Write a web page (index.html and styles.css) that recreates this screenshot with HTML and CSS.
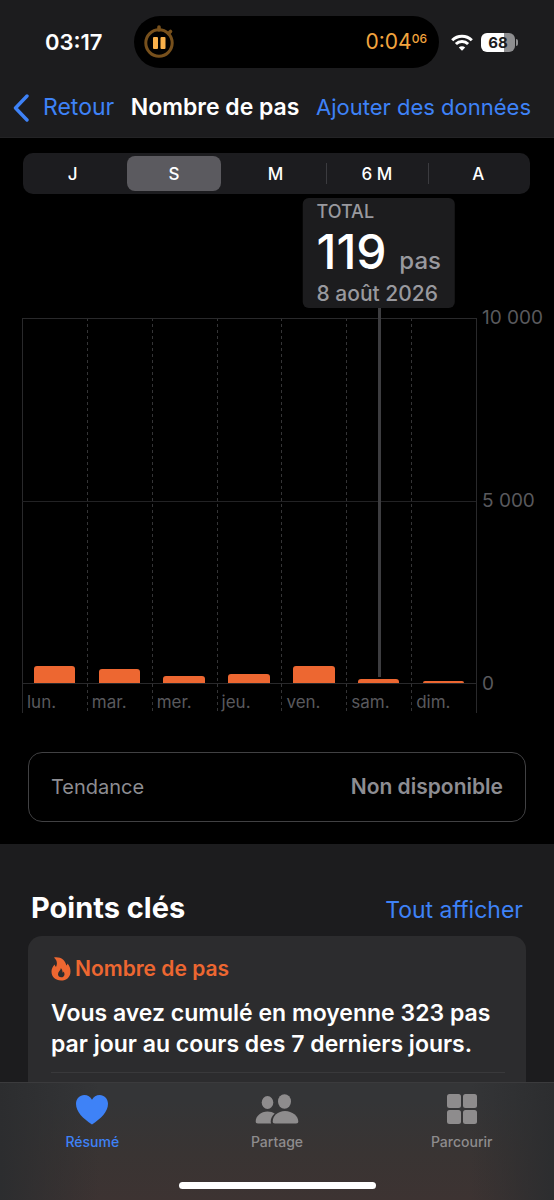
FILE: index.html
```html
<!DOCTYPE html>
<html lang="fr">
<head>
<meta charset="utf-8">
<meta name="viewport" content="width=device-width, initial-scale=1">
<title>Nombre de pas</title>
<link rel="stylesheet" href="styles.css">
</head>
<body>
<div class="app">
  <header class="header">
    <div class="status">
      <time class="clock">03:17</time>
      <div class="island">
        <svg class="stopwatch" viewBox="0 0 32 36" aria-hidden="true">
          <circle cx="16" cy="19" r="13.2" fill="none" stroke="#77501c" stroke-width="3"/>
          <path d="M16 6V3M25.5 9.5l2-2" stroke="#77501c" stroke-width="3.6" stroke-linecap="round"/>
          <rect x="10" y="13" width="5" height="12" rx="1" fill="#f9b14b"/>
          <rect x="17.500" y="13" width="5" height="12" rx="1" fill="#f9b14b"/>
        </svg>
        <span class="timer">0:04<span class="hundredths">06</span></span>
      </div>
      <div class="signals">
        <svg class="wifi" viewBox="0 0 22 17" aria-hidden="true">
          <g fill="none" stroke="#fff" stroke-width="3">
            <path d="M1.200 6.200a14 14 0 0 1 19.600 0"/>
            <path d="M4.900 10a8.700 8.700 0 0 1 12.200 0"/>
          </g>
          <path d="M11 16.800l-3.200-3.300a4.600 4.600 0 0 1 6.400 0z" fill="#fff"/>
        </svg>
        <span class="battery"><span class="level">68</span></span>
      </div>
    </div>
    <nav class="navbar">
      <a class="back" href="#retour">
        <svg class="chevron" viewBox="0 0 16 28" aria-hidden="true"><path d="M14 2L2.500 14 14 26" fill="none" stroke="currentColor" stroke-width="3.400" stroke-linecap="round" stroke-linejoin="round"/></svg>
        Retour
      </a>
      <h1 class="title">Nombre de pas</h1>
      <a class="add" href="#ajouter">Ajouter des données</a>
    </nav>
  </header>

  <main class="content">
    <section class="chart-section">
      <div class="segments">
        <button class="segment" type="button">J</button>
        <button class="segment selected" type="button" aria-pressed="true">S</button>
        <button class="segment" type="button">M</button>
        <button class="segment divided" type="button">6 M</button>
        <button class="segment divided" type="button">A</button>
      </div>

      <div class="chart">
        <div class="plot">
          <div class="day"><div class="track"><div class="bar" style="height:4.8%"></div></div><span class="day-name">lun.</span></div>
          <div class="day"><div class="track"><div class="bar" style="height:3.9%"></div></div><span class="day-name">mar.</span></div>
          <div class="day"><div class="track"><div class="bar" style="height:1.8%"></div></div><span class="day-name">mer.</span></div>
          <div class="day"><div class="track"><div class="bar" style="height:2.6%"></div></div><span class="day-name">jeu.</span></div>
          <div class="day"><div class="track"><div class="bar" style="height:4.8%"></div></div><span class="day-name">ven.</span></div>
          <div class="day">
            <div class="track"><div class="bar" style="height:1.2%"></div></div><span class="day-name">sam.</span>
            <div class="cursor"></div>
            <div class="tooltip">
              <span class="tip-label">TOTAL</span>
              <span class="tip-value">119 <span class="tip-unit">pas</span></span>
              <span class="tip-date">8 août 2026</span>
            </div>
          </div>
          <div class="day"><div class="track"><div class="bar" style="height:0.6%"></div></div><span class="day-name">dim.</span></div>
        </div>
        <div class="scale"><span>10 000</span><span>5 000</span><span>0</span></div>
      </div>

      <div class="trend"><span>Tendance</span><strong>Non disponible</strong></div>
    </section>

    <section class="highlights">
      <div class="highlights-head">
        <h2 class="heading">Points clés</h2>
        <a class="all" href="#tout">Tout afficher</a>
      </div>
      <article class="card">
        <h3 class="card-title">
          <svg class="flame" viewBox="0 0 20 24" aria-hidden="true"><path fill="currentColor" fill-rule="evenodd" d="M3 .5C9.500-.5 14.500 3 15.300 8.600c.7-.5 1-1.200 1.200-2.200 2 2.200 3 4.800 3 8C19.500 20 15.500 23.500 10 23.500S.5 20 .5 14.500c0-3 1.300-5 3.200-7 .2 1.200.6 1.800 1.400 2.300C6.500 6.500 6.200 3.500 3 .5zM9.800 11c.3 2.500-2.800 3.600-2.800 6.300 0 1.900 1.400 3 3.200 3s3.300-1.200 3.300-3.100c0-1.100-.3-2-1-2.700-.1.700-.4 1.100-.8 1.300-.1-1.900-.7-3.700-1.900-4.800z"/></svg>
          Nombre de pas
        </h3>
        <p class="card-text">Vous avez cumulé en moyenne 323 pas par jour au cours des 7 derniers jours.</p>
      </article>
    </section>
  </main>

  <nav class="tabbar">
    <div class="tabs">
      <a class="tab active" href="#resume">
        <svg class="tab-icon" viewBox="0 0 44 32" aria-hidden="true"><path fill="currentColor" d="M22 31.500C13 25.500 6 19 6 10.800 6 5.500 9.800 2 14.300 2 17.700 2 20.500 3.800 22 6.800 23.500 3.800 26.300 2 29.700 2 34.200 2 38 5.500 38 10.800 38 19 31 25.500 22 31.500z"/></svg>
        Résumé
      </a>
      <a class="tab" href="#partage">
        <svg class="tab-icon" viewBox="0 0 44 32" aria-hidden="true"><g fill="currentColor"><ellipse cx="12.500" cy="9.500" rx="5.800" ry="6.500"/><ellipse cx="29.500" cy="8.500" rx="6.500" ry="7.300"/><path d="M3 30.500C1.300 30.500.7 29.800.7 28.500.7 23 6 18.500 12.500 18.500c3 0 5.300.7 7.200 2-2.500 2.200-4 5-4 8 0 .8.100 1.400.5 2z"/><path d="M20 30.500c-1.700 0-2.300-.7-2.300-2 0-5.300 5-10.500 12.300-10.500S43.300 23.200 43.300 28.500c0 1.300-.6 2-2.300 2z"/></g></svg>
        Partage
      </a>
      <a class="tab" href="#parcourir">
        <svg class="tab-icon" viewBox="0 0 44 32" aria-hidden="true"><g fill="currentColor"><rect x="7" y="1" width="14" height="14" rx="2.500"/><rect x="23" y="1" width="14" height="14" rx="2.500"/><rect x="7" y="17" width="14" height="14" rx="2.500"/><rect x="23" y="17" width="14" height="14" rx="2.500"/></g></svg>
        Parcourir
      </a>
    </div>
    <div class="home-indicator"></div>
  </nav>
</div>
</body>
</html>
```
FILE: styles.css
```css
* { box-sizing: border-box; }

body {
  margin: 0;
  background: #1c1c1e;
  color: #fff;
  font-family: Inter, "Liberation Sans", sans-serif;
}

h1, h2, h3, p { margin: 0; }
a { color: #3e82f7; text-decoration: none; }

.app {
  display: flex;
  flex-direction: column;
  height: 100vh;
}

/* Status bar and navigation */
.header {
  flex: none;
  background: #1c1c1e;
  border-bottom: 1px solid #232325;
}

.status {
  display: grid;
  grid-template-columns: 1fr 305px 1fr;
  align-items: center;
  padding: 16px 0 0 20px;
  margin-right: 1px;
}

.clock {
  padding-left: 25px;
  font-size: 22px;
  font-weight: 600;
}

.island {
  display: flex;
  align-items: center;
  justify-content: space-between;
  height: 52px;
  padding: 0 12px 0 9px;
  border-radius: 26px;
  background: #000;
}

.stopwatch { width: 32px; height: 36px; }

.timer {
  display: flex;
  align-items: flex-start;
  color: #f3a53e;
  font-size: 21px;
  line-height: 24px;
}

.hundredths { font-size: 12px; font-weight: 500; line-height: 18px; }

.signals {
  display: flex;
  align-items: center;
  gap: 8px;
  padding-left: 12px;
}

.wifi { width: 22px; height: 17px; }

.battery {
  position: relative;
  width: 34px;
  height: 19px;
  border-radius: 6px;
  background: linear-gradient(90deg, #fff 68%, #8e8e90 68%);
}

.battery::after {
  content: "";
  position: absolute;
  top: 6px;
  right: -3px;
  width: 2px;
  height: 7px;
  border-radius: 0 2px 2px 0;
  background: #8e8e90;
}

.level {
  display: block;
  color: #1c1c1e;
  font-size: 15px;
  font-weight: 700;
  line-height: 19px;
  text-align: center;
}

.navbar {
  display: flex;
  align-items: center;
  justify-content: space-between;
  padding: 25px 23px 15px 13px;
  font-size: 23px;
  line-height: 29px;
  white-space: nowrap;
}

.back { display: flex; align-items: center; gap: 14px; }
.chevron { width: 16px; height: 28px; }
.title { font-size: 23px; font-weight: 600; }
.add { font-size: 22px; }

/* Scrolling content */
.content {
  flex: 1;
  min-height: 0;
  overflow: auto;
  scrollbar-width: none;
}

.chart-section {
  padding: 15px 0 22px;
  background: #000;
}

.segments {
  display: grid;
  grid-template-columns: repeat(5, 1fr);
  height: 41px;
  margin: 0 24px 0 23px;
  border-radius: 10px;
  background: #1c1c1f;
}

.segment {
  position: relative;
  margin: 3px 5px 3px 3px;
  padding: 0;
  border: 0;
  border-radius: 8px;
  background: none;
  color: #fff;
  font: 500 17px Inter, "Liberation Sans", sans-serif;
}

.segment.selected { background: #5b5a5f; }

.segment.divided::before {
  content: "";
  position: absolute;
  top: 7px;
  bottom: 7px;
  left: -4px;
  width: 1px;
  background: #3b3b3f;
}

/* Chart */
.chart {
  display: flex;
  margin-top: 124px;
  padding-left: 22px;
}

.plot {
  display: flex;
  flex: 1;
  border-right: 1px solid #29292b;
}

.day {
  position: relative;
  flex: 1;
  background: repeating-linear-gradient(#343436 0 3px, transparent 3px 6px) left / 1px 100% no-repeat;
}

.day:first-child { background: linear-gradient(#29292b, #29292b) left / 1px 100% no-repeat; }

.track {
  display: flex;
  align-items: flex-end;
  justify-content: center;
  height: 366px;
  border-top: 1px solid #29292b;
  border-bottom: 1px solid #29292b;
  background: linear-gradient(#222224, #222224) center / 100% 1px no-repeat;
}

.bar {
  width: 64%;
  border-radius: 3px 3px 0 0;
  background: #ed6731;
}

.day-name {
  display: block;
  padding: 7px 0 0 5px;
  color: #59595d;
  font-size: 17px;
  line-height: 22px;
}

.cursor {
  position: absolute;
  top: -10px;
  left: 50%;
  width: 3px;
  height: 369px;
  margin-left: -1px;
  background: #3d3d40;
}

.tooltip {
  position: absolute;
  bottom: calc(100% + 10px);
  left: 50%;
  display: flex;
  flex-direction: column;
  padding: 4px 14px 3px;
  border-radius: 6px;
  background: #1c1c1e;
  color: #99999e;
  font-weight: 500;
  white-space: nowrap;
  transform: translateX(-50%);
}

.tip-label { font-size: 18px; line-height: 20px; }
.tip-value { color: #fff; font-size: 48px; line-height: 60px; }
.tip-unit { color: #99999e; font-size: 24px; line-height: 24px; }
.tip-date { font-size: 21px; line-height: 23px; }

.scale {
  display: flex;
  flex: none;
  flex-direction: column;
  justify-content: space-between;
  width: 77px;
  height: 388px;
  margin-top: -11px;
  padding-left: 5px;
  color: #59595d;
  font-size: 19px;
  line-height: 22px;
}

.trend {
  display: flex;
  justify-content: space-between;
  margin: 39px 28px 0;
  padding: 20px 22px;
  border: 1px solid #414143;
  border-radius: 14px;
  color: #8d8d92;
  font-size: 20px;
  line-height: 28px;
}

.trend strong { font-size: 21px; font-weight: 600; }

/* Highlights */
.highlights { padding: 47px 28px 0; }

.highlights-head {
  display: flex;
  align-items: baseline;
  justify-content: space-between;
  padding: 0 3px;
}

.heading { font-size: 29px; font-weight: 700; line-height: 34px; }
.all { font-size: 23px; }

.card {
  margin-top: 11px;
  padding: 19px 21px 10px 23px;
  border-radius: 14px 14px 0 0;
  background: #2c2c2e;
}

.card-title {
  display: flex;
  align-items: center;
  gap: 4px;
  color: #ed6731;
  font-size: 21px;
  font-weight: 600;
  line-height: 28px;
}

.flame { width: 20px; height: 24px; }

.card-text {
  margin-top: 15px;
  padding-bottom: 12px;
  border-bottom: 1px solid #39393b;
  font-size: 23px;
  font-weight: 600;
  line-height: 31px;
}

/* Tab bar */
.tabbar {
  flex: none;
  padding: 10px 0 11px;
  border-top: 1px solid #3b3b3d;
  background:
    linear-gradient(90deg, #2c2d2f, transparent 18% 85%, #2c2d2f),
    linear-gradient(#343537 15%, #393433 60%, #3d3332);
}

.tabs { display: grid; grid-template-columns: repeat(3, 1fr); }

.tab {
  display: flex;
  flex-direction: column;
  align-items: center;
  gap: 7px;
  color: #8e8c8d;
  font-size: 14px;
  font-weight: 500;
  line-height: 20px;
}

.tab.active { color: #3e82f7; }
.tab-icon { width: 44px; height: 32px; }

.home-indicator {
  width: 197px;
  height: 7px;
  margin: 30px auto 0;
  border-radius: 4px;
  background: #fff;
}
```
